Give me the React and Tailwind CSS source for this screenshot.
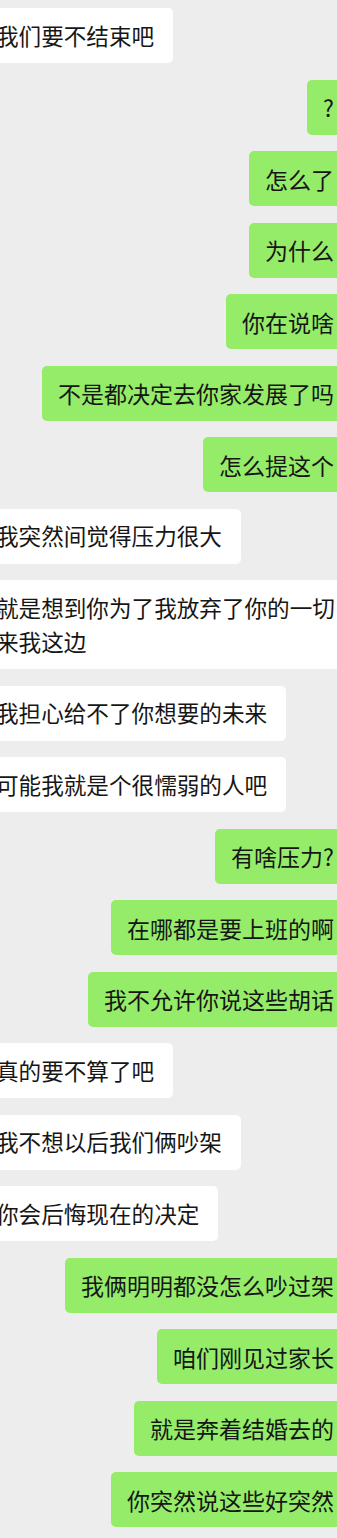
import React from "react";

const msgs = [
  ["l", "我们要不结束吧"],
  ["r", "?"],
  ["r", "怎么了"],
  ["r", "为什么"],
  ["r", "你在说啥"],
  ["r", "不是都决定去你家发展了吗"],
  ["r", "怎么提这个"],
  ["l", "我突然间觉得压力很大"],
  ["l", "就是想到你为了我放弃了你的一切来我这边"],
  ["l", "我担心给不了你想要的未来"],
  ["l", "可能我就是个很懦弱的人吧"],
  ["r", "有啥压力?"],
  ["r", "在哪都是要上班的啊"],
  ["r", "我不允许你说这些胡话"],
  ["l", "真的要不算了吧"],
  ["l", "我不想以后我们俩吵架"],
  ["l", "你会后悔现在的决定"],
  ["r", "我俩明明都没怎么吵过架"],
  ["r", "咱们刚见过家长"],
  ["r", "就是奔着结婚去的"],
  ["r", "你突然说这些好突然"],
];

export default function App() {
  return (
    <div
      className="w-[337px] h-[1538px] overflow-hidden bg-[#ededed] pt-[8px] flex flex-col gap-[16.5px]"
      style={{ fontFamily: '"Noto Sans CJK SC", "Noto Sans", sans-serif' }}
    >
      {msgs.map(([side, text], i) =>
        side === "l" ? (
          <div key={i} className="flex justify-start">
            <div className="shrink-0 ml-[-21px] max-w-[390px] bg-white rounded-[5px] pl-[17px] pr-[19px] py-[10.5px] text-[22.6px] leading-[34px] text-[#161616]">
              {text}
            </div>
          </div>
        ) : (
          <div key={i} className="flex justify-end">
            <div className="shrink-0 bg-[#95ec69] rounded-l-[5px] pl-[16px] pr-[3px] py-[10.5px] text-[23px] leading-[34px] text-[#161616] whitespace-nowrap">
              {text}
            </div>
          </div>
        )
      )}
    </div>
  );
}
